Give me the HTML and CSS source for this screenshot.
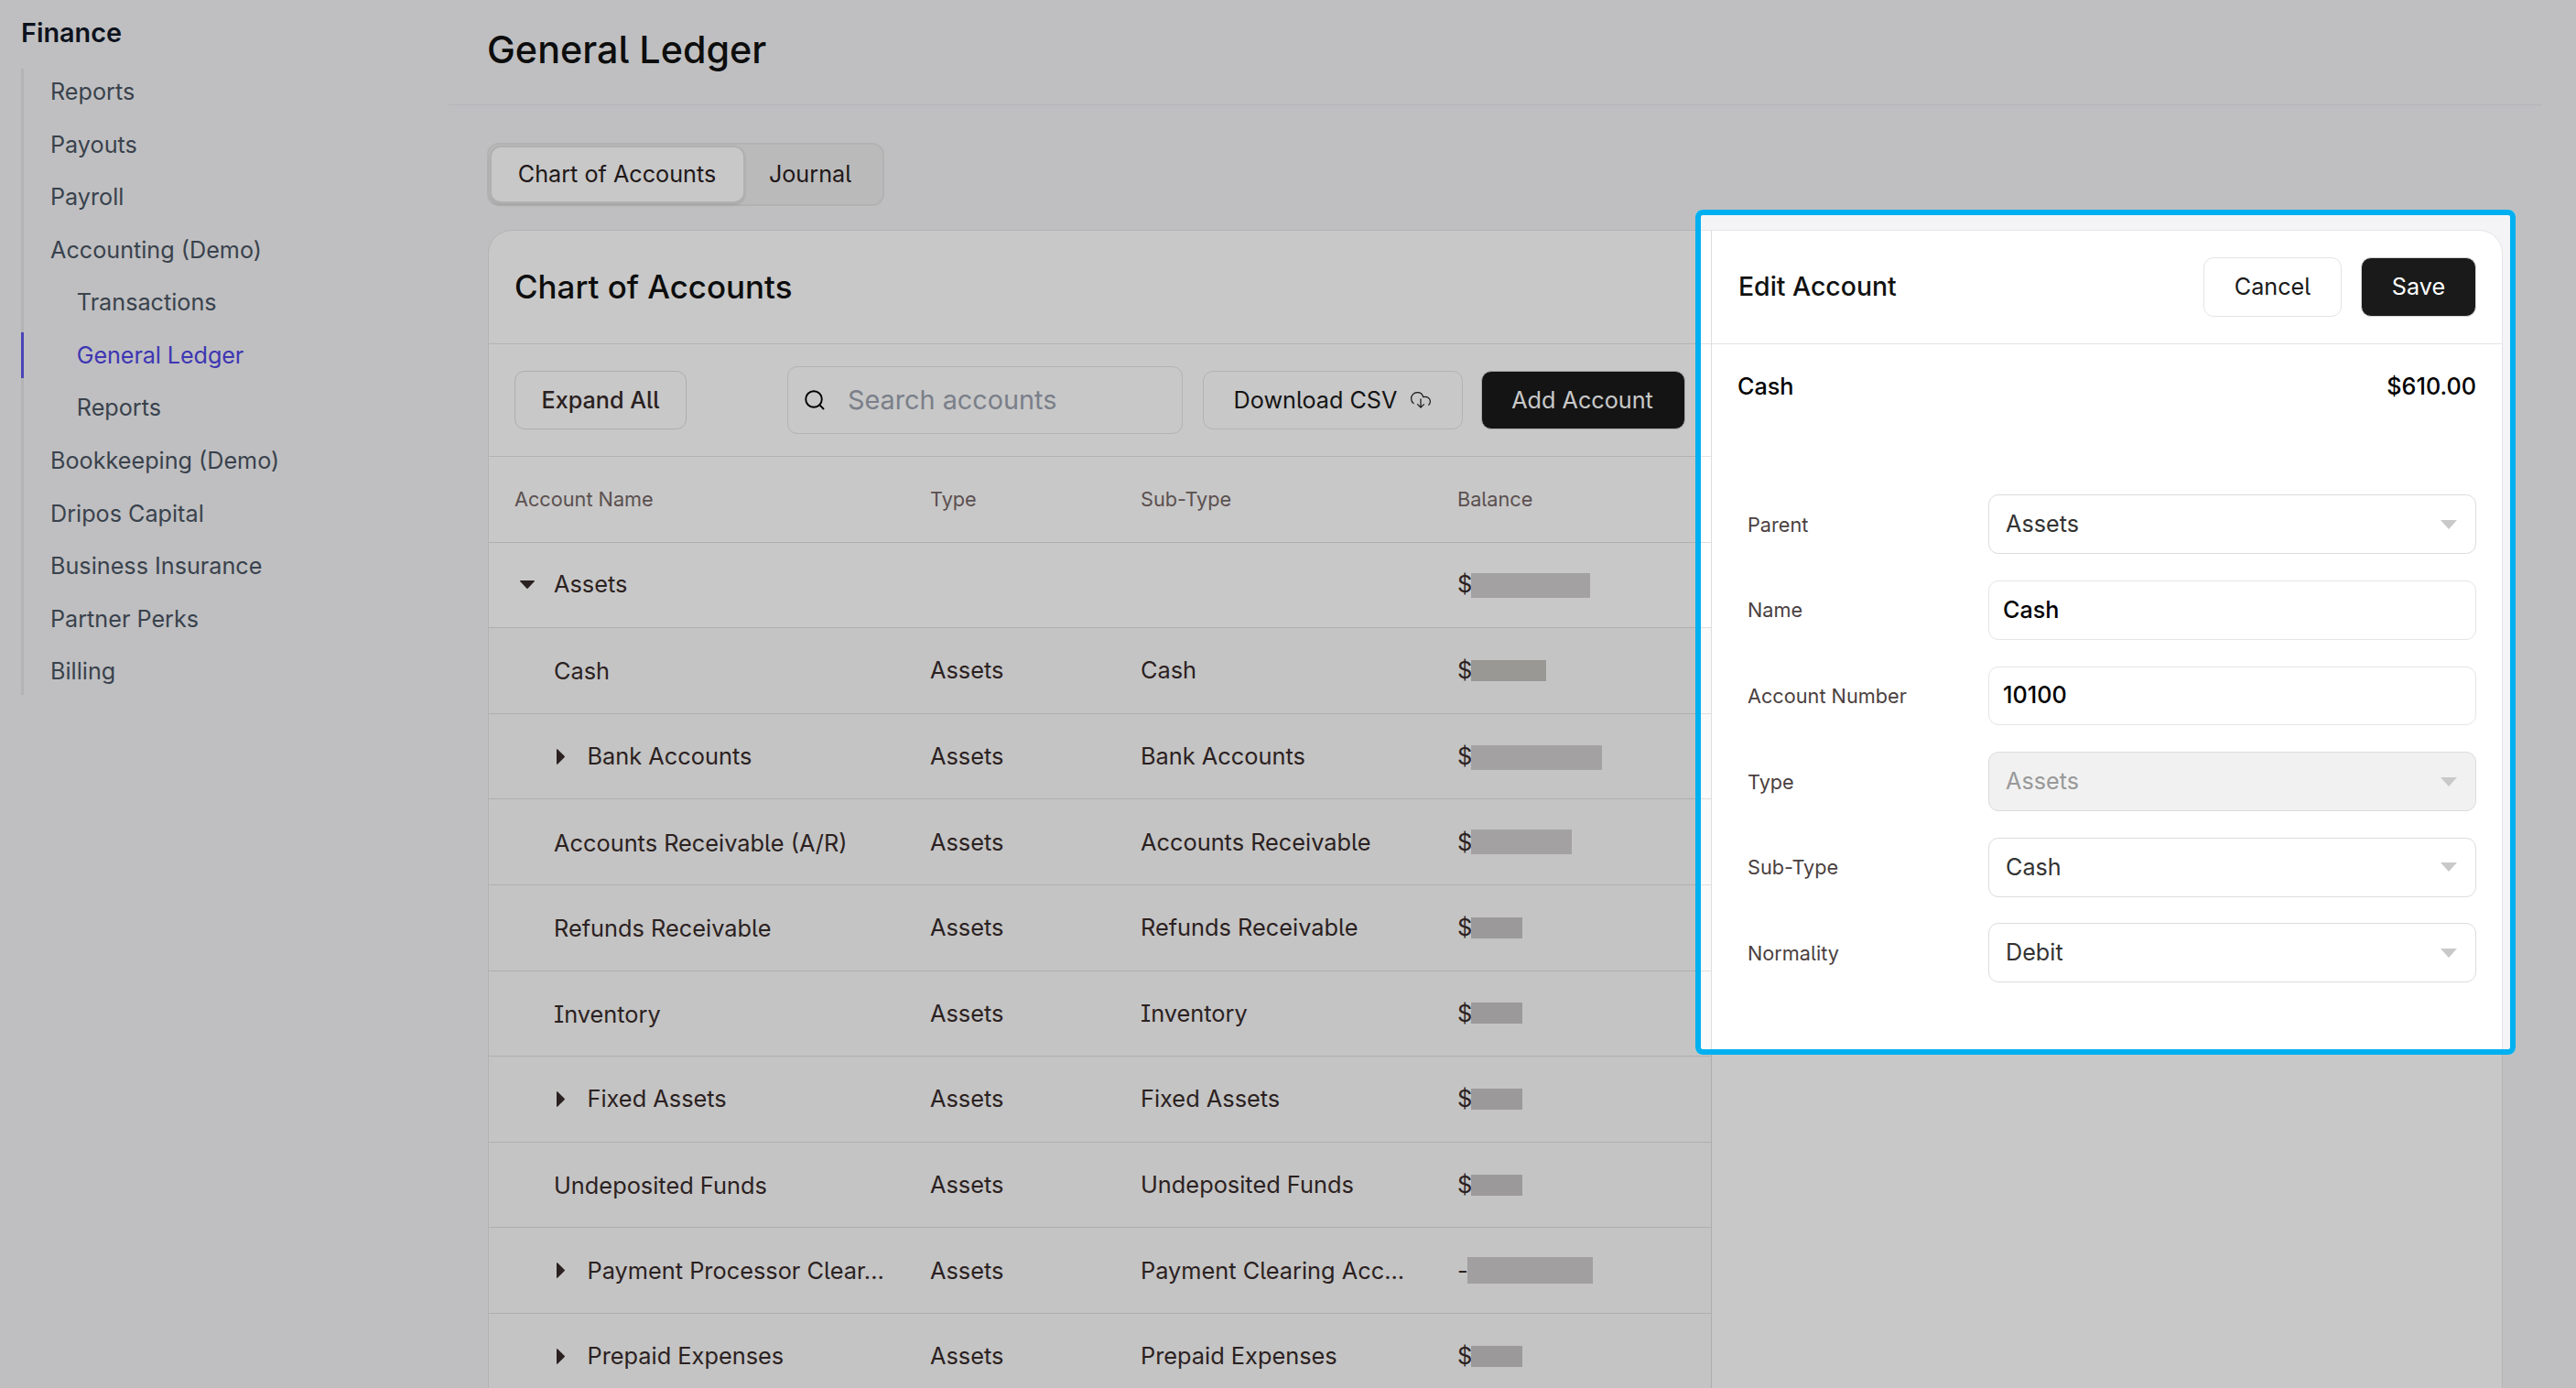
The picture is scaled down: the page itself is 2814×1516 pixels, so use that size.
FILE: index.html
```html
<!DOCTYPE html>
<html lang="en">
<head>
<meta charset="utf-8">
<title>General Ledger</title>
<link rel="stylesheet" href="styles.css">
</head>
<body>
<div class="app">
  <aside class="sidebar">
    <h2 class="sidebar-title">Finance</h2>
    <nav class="nav">
      <a class="nav-item">Reports</a>
      <a class="nav-item">Payouts</a>
      <a class="nav-item">Payroll</a>
      <a class="nav-item">Accounting (Demo)</a>
      <a class="nav-item nested">Transactions</a>
      <a class="nav-item nested active">General Ledger</a>
      <a class="nav-item nested">Reports</a>
      <a class="nav-item">Bookkeeping (Demo)</a>
      <a class="nav-item">Dripos Capital</a>
      <a class="nav-item">Business Insurance</a>
      <a class="nav-item">Partner Perks</a>
      <a class="nav-item">Billing</a>
    </nav>
  </aside>
  <main class="main">
    <header class="page-header"><h1>General Ledger</h1></header>
    <div class="content">
      <div class="tabs">
        <button class="tab selected">Chart of Accounts</button>
        <button class="tab">Journal</button>
      </div>
      <div class="card">
        <section class="ledger">
          <div class="card-head"><h2>Chart of Accounts</h2></div>
          <div class="toolbar">
            <button class="btn expand">Expand All</button>
            <div class="search">
              <svg class="search-icon" viewBox="0 0 22 22"><circle cx="10" cy="10" r="8.8"/><path d="M16.4 16.4l4.6 4.6"/></svg>
              <span>Search accounts</span>
            </div>
            <button class="btn download">Download CSV
              <svg class="cloud" viewBox="0 0 22 18"><path d="M3.2 12.6C1.4 11.2.6 9.200.6 7.400.6 3.700 3.500.700 7.200.700c3 0 5.700 1.900 6.500 4.900 4-.9 7.700 1.100 7.700 4.900 0 1.500-.6 2.900-1.700 3.700M11 7.800v9.200M7.500 13.700l3.500 3.500 3.500-3.500"/></svg>
            </button>
            <button class="btn dark add">Add Account</button>
          </div>
          <div class="row head"><span>Account Name</span><span>Type</span><span>Sub-Type</span><span>Balance</span></div>
          <div class="row parent">
            <span class="name"><svg class="caret down" viewBox="0 0 16 9"><path d="M.8 0h14.400q1.200.2.4 1.200L8.800 8.600q-.8.8-1.600 0L.4 1.200Q-.4.2.8 0z"/></svg>Assets</span>
            <span></span><span></span><span class="balance">$<i class="mask big low" style="width:130px"></i></span>
          </div>
          <div class="row">
            <span class="name leaf">Cash</span><span>Assets</span><span>Cash</span><span class="balance">$<i class="mask warm" style="width:82px"></i></span>
          </div>
          <div class="row">
            <span class="name sub"><svg class="caret" viewBox="0 0 9 17"><path d="M0 .8Q.2-.4 1.200.4L8.600 7.700q.8.8 0 1.600L1.200 16.600Q.2 17.400 0 16.200z"/></svg>Bank Accounts</span><span>Assets</span><span>Bank Accounts</span><span class="balance">$<i class="mask big low" style="width:143px"></i></span>
          </div>
          <div class="row">
            <span class="name leaf">Accounts Receivable (A/R)</span><span>Assets</span><span>Accounts Receivable</span><span class="balance">$<i class="mask big" style="width:110px"></i></span>
          </div>
          <div class="row">
            <span class="name leaf">Refunds Receivable</span><span>Assets</span><span>Refunds Receivable</span><span class="balance">$<i class="mask" style="width:56px"></i></span>
          </div>
          <div class="row">
            <span class="name leaf">Inventory</span><span>Assets</span><span>Inventory</span><span class="balance">$<i class="mask" style="width:56px"></i></span>
          </div>
          <div class="row">
            <span class="name sub"><svg class="caret" viewBox="0 0 9 17"><path d="M0 .8Q.2-.4 1.200.4L8.600 7.700q.8.8 0 1.600L1.200 16.600Q.2 17.400 0 16.200z"/></svg>Fixed Assets</span><span>Assets</span><span>Fixed Assets</span><span class="balance">$<i class="mask" style="width:56px"></i></span>
          </div>
          <div class="row">
            <span class="name leaf">Undeposited Funds</span><span>Assets</span><span>Undeposited Funds</span><span class="balance">$<i class="mask" style="width:56px"></i></span>
          </div>
          <div class="row">
            <span class="name sub"><svg class="caret" viewBox="0 0 9 17"><path d="M0 .8Q.2-.4 1.200.4L8.600 7.700q.8.8 0 1.600L1.200 16.600Q.2 17.400 0 16.200z"/></svg>Payment Processor Clear...</span><span>Assets</span><span>Payment Clearing Acc...</span><span class="balance minus">-<i class="mask huge" style="width:137px"></i></span>
          </div>
          <div class="row">
            <span class="name sub"><svg class="caret" viewBox="0 0 9 17"><path d="M0 .8Q.2-.4 1.200.4L8.600 7.700q.8.8 0 1.600L1.200 16.600Q.2 17.400 0 16.200z"/></svg>Prepaid Expenses</span><span>Assets</span><span>Prepaid Expenses</span><span class="balance">$<i class="mask" style="width:56px"></i></span>
          </div>
        </section>
        <section class="panel">
          <div class="card-head">
            <h3>Edit Account</h3>
            <div class="actions"><button class="btn cancel">Cancel</button><button class="btn dark save">Save</button></div>
          </div>
          <div class="summary"><span>Cash</span><span>$610.00</span></div>
          <div class="form">
            <div class="field"><label>Parent</label><div class="control select">Assets<svg class="arrow" viewBox="0 0 18 10"><path d="M0 0h18L9 10z"/></svg></div></div>
            <div class="field"><label>Name</label><div class="control input">Cash</div></div>
            <div class="field"><label>Account Number</label><div class="control input">10100</div></div>
            <div class="field"><label>Type</label><div class="control select disabled">Assets<svg class="arrow" viewBox="0 0 18 10"><path d="M0 0h18L9 10z"/></svg></div></div>
            <div class="field"><label>Sub-Type</label><div class="control select">Cash<svg class="arrow" viewBox="0 0 18 10"><path d="M0 0h18L9 10z"/></svg></div></div>
            <div class="field"><label>Normality</label><div class="control select">Debit<svg class="arrow" viewBox="0 0 18 10"><path d="M0 0h18L9 10z"/></svg></div></div>
          </div>
        </section>
      </div>
    </div>
  </main>
  <div class="spotlight"></div>
</div>
</body>
</html>
```
FILE: styles.css
```css
* { box-sizing: border-box; margin: 0; }
body { font: 400 25.2px/36px Inter, "Liberation Sans", sans-serif; background: #f4f4f6; }
button { font: inherit; font-feature-settings: inherit; }

.app { position: relative; display: flex; width: 2814px; height: 1516px; overflow: hidden; }

/* Sidebar */
.sidebar { width: 490px; flex: none; padding: 18px 0 0 23px; color: #4b5563; }
.sidebar-title { font-size: 28.8px; line-height: 36px; font-weight: 600; color: #111827; }
.nav { margin-top: 21px; display: flex; flex-direction: column; gap: 7.2px; box-shadow: inset 3px 0 #e5e5e7; }
.nav-item { height: 50.4px; line-height: 50.4px; padding-left: 29px; border-left: 3px solid transparent; }
.nav-item.nested { padding-left: 57.8px; }
.nav-item.active { color: #4f46e5; border-left-color: #5f59e8; letter-spacing: -.1px; }

/* Main column */
.main { width: 2287px; flex: none; font-feature-settings: "cv05", "cv08"; }
.page-header { height: 115px; padding: 29px 0 0 42px; border-bottom: 1px solid #e5e7eb; }
h1 { font-size: 41.3px; line-height: 50px; font-weight: 500; color: #111; }
.content { padding: 41px 43px 0 42px; }

.tabs { width: 434px; height: 69px; display: flex; border: 2px solid #e3e3e3; border-radius: 13px; background: #eee; padding: 1px; }
.tab { border: 2px solid transparent; background: none; border-radius: 12px; padding: 0 6px 2px 0; color: #2b1f1f; width: 148px; height: 63px; }
.tab.selected { width: 279px; padding-right: 1px; background: #fff; border-color: #e1e1e1; box-shadow: 0 2px 3px rgba(0, 0, 0, .1); }

/* Card */
.card { margin: 26px 0 0 1px; width: 2201px; height: 1400px; display: flex; background: #fff; border: 1px solid #e3e5e8; border-radius: 26px; overflow: hidden; }
.ledger { width: 1335px; flex: none; color: #382b2b; }
.card-head { height: 124px; display: flex; align-items: center; justify-content: space-between; padding: 0 28px; border-bottom: 1px solid #e5e5e6; }
h2 { font-size: 34.9px; font-weight: 500; color: #111; }
.card-head h2, .card-head h3 { padding-bottom: 2px; }

.toolbar { height: 123px; display: flex; align-items: center; padding: 0 28px; border-bottom: 1px solid #e5e5e6; }
.btn { height: 64px; padding: 0; border: 1px solid #e4e4e5; border-radius: 11px; background: #fff; color: #1a1a1a; display: flex; align-items: center; justify-content: center; white-space: nowrap; }
.btn.dark { background: #1a1a1a; color: #fff; border-color: #d4d4d4; }
.expand { width: 188px; color: #382b2b; font-weight: 500; border-color: #dededf; }
.search { margin-left: auto; width: 432px; height: 74px; display: flex; align-items: center; gap: 25px; padding-left: 18px; border: 1px solid #e4e4e5; border-radius: 11px; color: #9ca3af; font-size: 28.8px; }
.search-icon { width: 22px; height: 22px; fill: none; stroke: #000; stroke-width: 1.9; }
.download { width: 284px; margin-left: 22px; gap: 15px; padding: 0 1px 1px 0; }
.cloud { width: 22px; height: 18px; fill: none; stroke: #1a1a1a; stroke-width: 1.2; stroke-linecap: round; stroke-linejoin: round; }
.add { width: 223px; margin-left: 20px; padding: 0 2px 1px 0; }

.row { height: 93.6px; display: grid; grid-template-columns: 454px 230px 346px 1fr; align-items: center; padding-left: 28px; border-bottom: 1px solid #dfdfe0; background: #fafafa; white-space: nowrap; font-size: 25.35px; }
.row.head { background: #fff; font-size: 21.7px; color: #756666; }
.row.parent { background: #fff; }
.name { display: flex; align-items: center; padding-left: 6px; }
.row.parent > * { padding-bottom: 1px; }
.name.leaf { padding: 2px 0 0 43px; }
.name.sub { padding-left: 46px; }
.caret { width: 9px; height: 17px; margin-right: 24.5px; fill: #382b2b; }
.caret.down { width: 16px; height: 9px; margin-right: 21px; }
.balance { display: flex; align-items: center; }
.mask { height: 23px; margin-left: -1px; background: #c6c3c4; }
.mask.warm { background: #c4c2bd; }
.mask.big { height: 27px; background: #d0cecf; }
.mask.low { margin-top: 3px; }
.mask.huge { height: 29px; background: #cecbcc; }

/* Edit panel */
.panel { flex: 1; border-left: 1px solid #dedede; }
h3 { font-size: 28.4px; font-weight: 500; color: #111; padding-left: 1px; }
.actions { display: flex; gap: 21px; }
.cancel { width: 151px; height: 65px; }
.save { width: 126px; height: 65px; }
.actions .btn { padding-bottom: 1px; }
.summary { display: flex; justify-content: space-between; padding: 28px 28px 0; font-weight: 500; color: #000; }
.form { display: flex; flex-direction: column; gap: 28.8px; padding: 100.4px 28px 0 39px; }
.field { height: 64.8px; display: flex; align-items: center; justify-content: space-between; }
.field label { font-size: 21.7px; color: #4a3f3f; }
.control { width: 533px; height: 64.8px; display: flex; align-items: center; justify-content: space-between; border: 1px solid #dcdcdc; border-radius: 11px; padding: 0 20px 1px 18px; color: #333; }
.control.input { border-color: #e5e5e6; padding-left: 15px; color: #000; font-weight: 500; }
.control.disabled { background: #f1f1f1; color: #999; }
.arrow { width: 18px; height: 10px; margin-top: 1px; fill: #c9c9c9; }

/* Dims the page outside the framed area */
.spotlight { position: absolute; left: 1852px; top: 229px; width: 896px; height: 923px; border: 6px solid #00b0f0; border-radius: 8px; box-shadow: 0 0 0 4000px rgba(0, 0, 0, .216); }
```
